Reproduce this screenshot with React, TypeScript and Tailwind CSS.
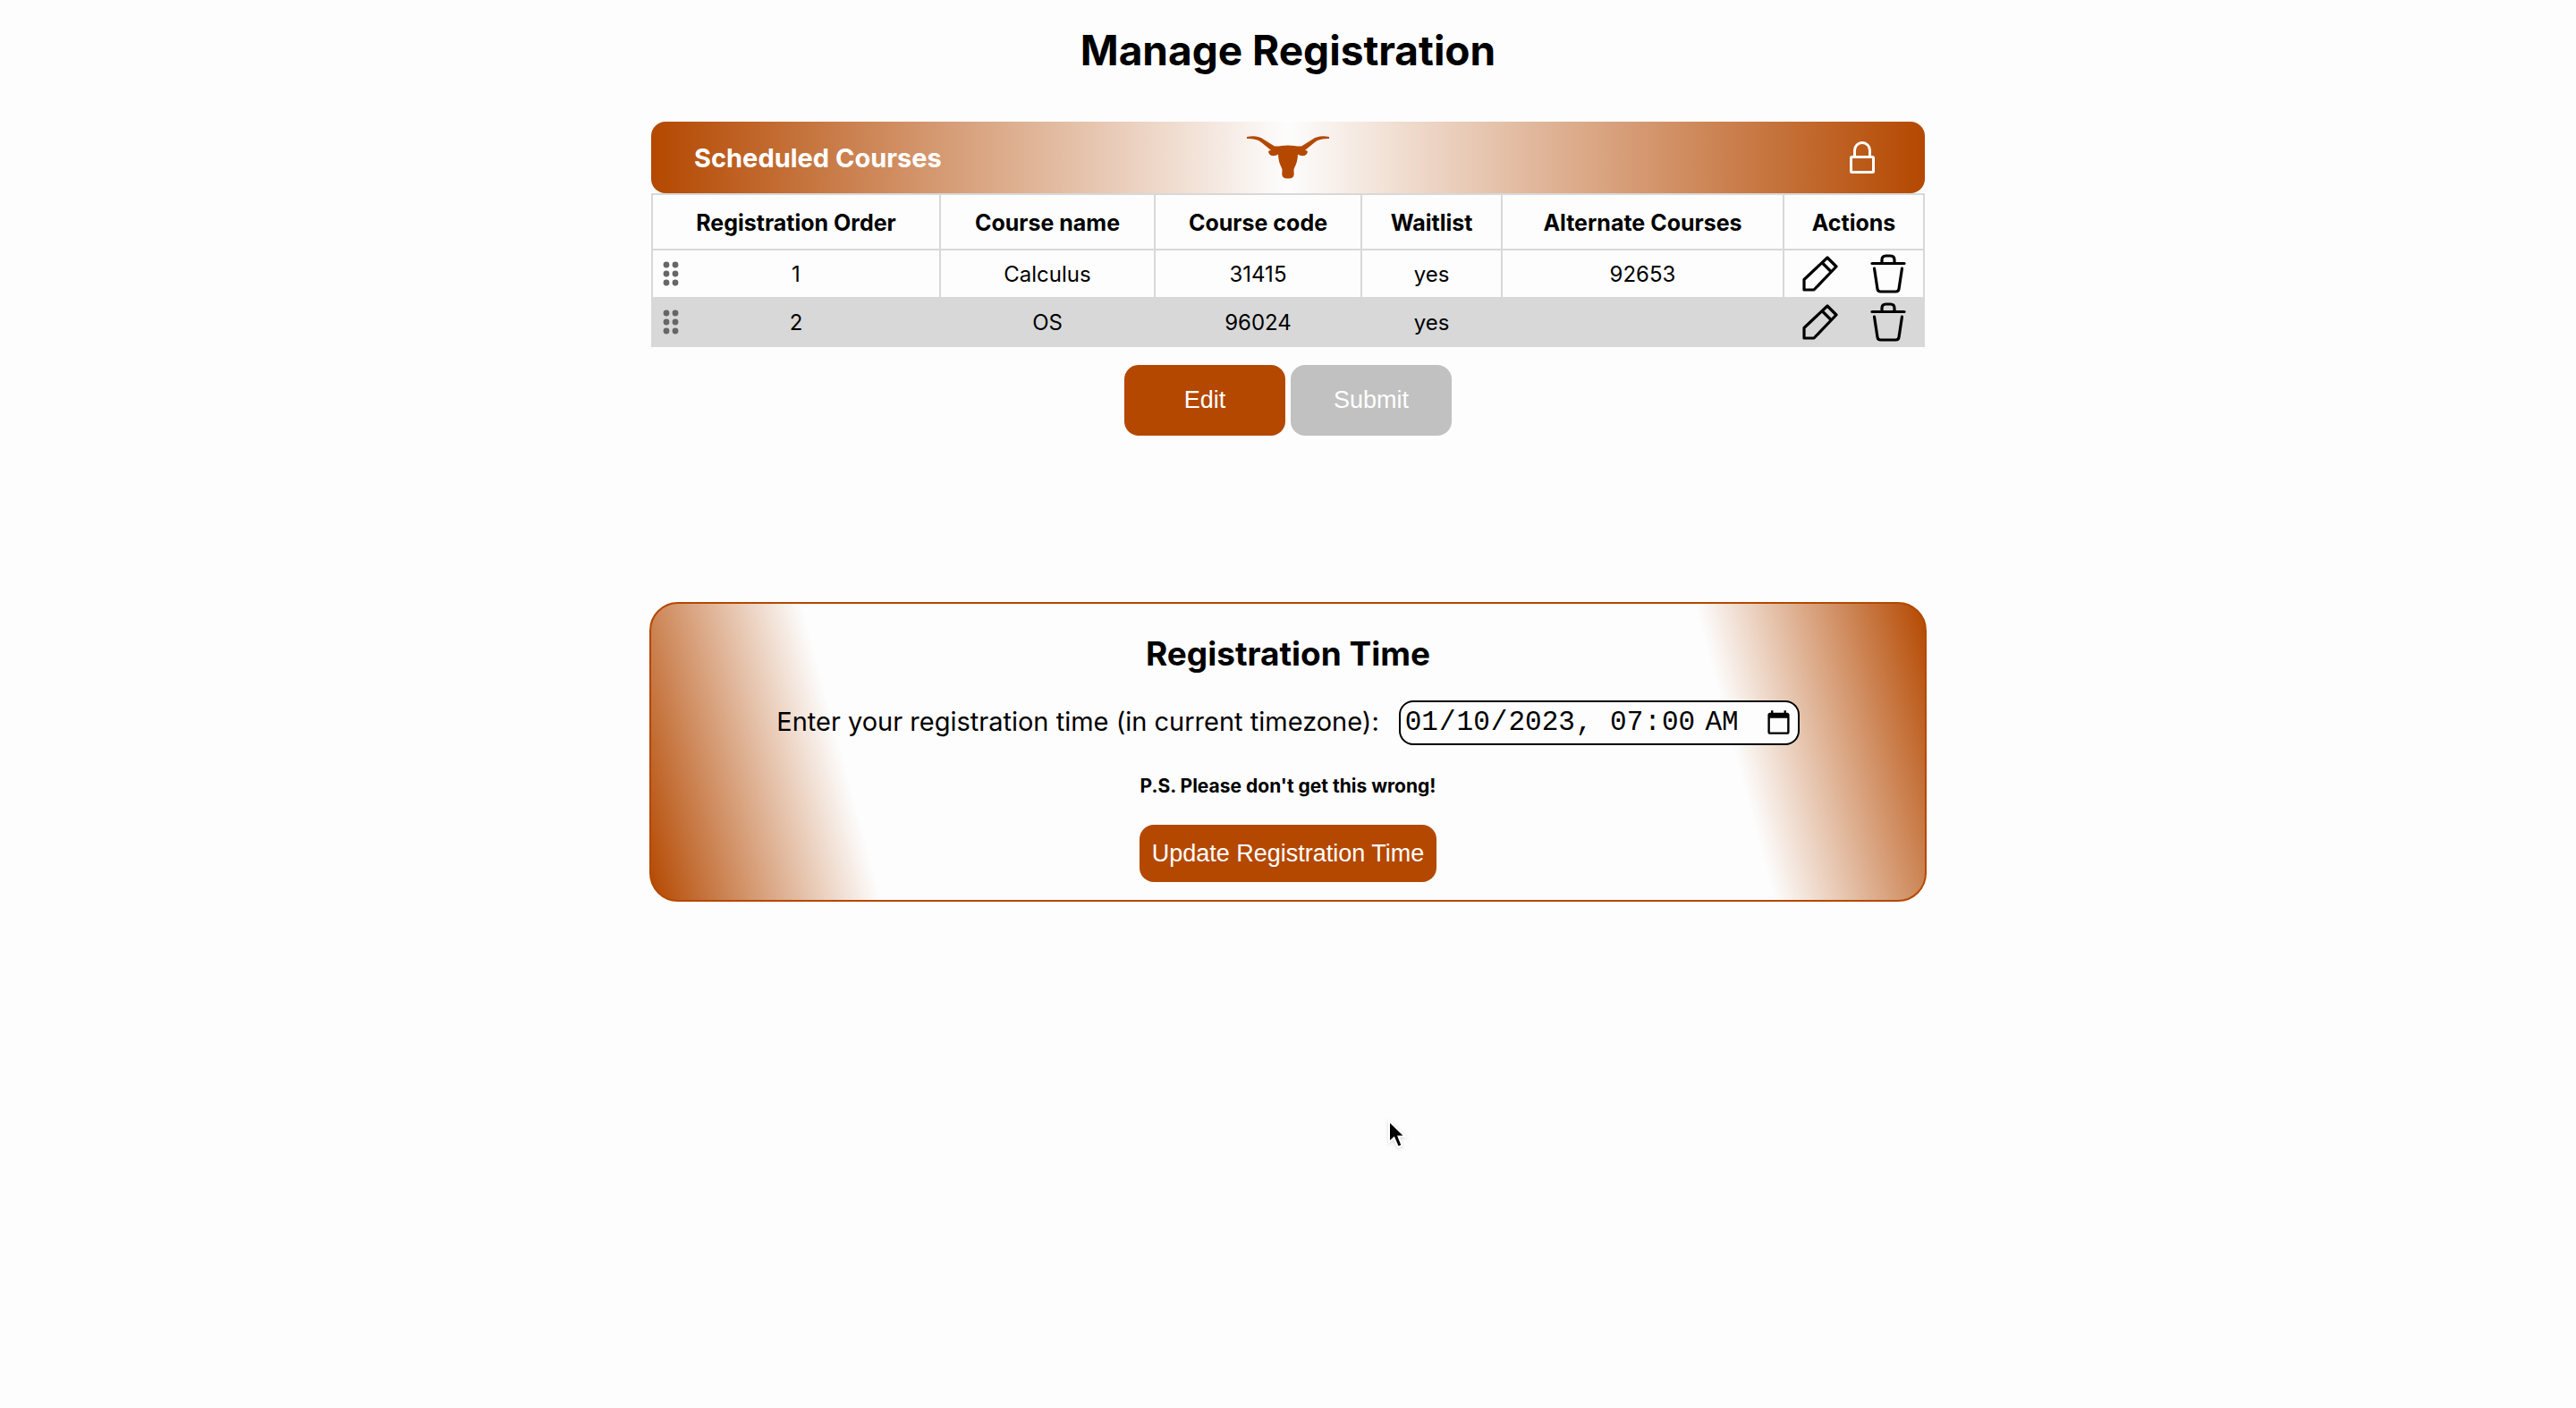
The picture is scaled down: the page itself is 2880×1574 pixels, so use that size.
import { useState } from "react";

type Course = { name: string; code: string; waitlist: string; alternate: string };

const courses: Course[] = [
  { name: "Calculus", code: "31415", waitlist: "yes", alternate: "92653" },
  { name: "OS", code: "96024", waitlist: "yes", alternate: "" },
];

const headings = [
  { label: "Registration Order", width: "w-[322px]" },
  { label: "Course name", width: "w-[240px]" },
  { label: "Course code", width: "w-[231px]" },
  { label: "Waitlist", width: "w-[157px]" },
  { label: "Alternate Courses", width: "w-[315px]" },
  { label: "Actions", width: "w-[157px]" },
];

function Longhorn() {
  return (
    <svg viewBox="0 0 92 48" className="h-12 w-[92px] fill-[#b44800]" aria-hidden="true">
      <path d="M0 1C8-.5 14 .5 19 4L31 11.500C35 12 40 10.500 46 10.500S57 12 61 11.500L73 4C78 .5 84-.5 92 1V3C84 3 80 4 76 7L65 16C69 16.500 68 18 67 20C65 23 60 22.500 57 20.500C57 27 55 32 53 36C51.500 39 54 43 51.500 46C49.500 48 42.500 48 40.500 46C38 43 40.500 39 39 36C37 32 35 27 35 20.500C32 22.500 27 23 25 20C24 18 23 16.500 27 16L16 7C12 4 8 3 0 3Z" />
    </svg>
  );
}

function Lock() {
  return (
    <svg viewBox="0 0 28 36" className="h-9 w-7" fill="none" stroke="currentColor" strokeWidth="3" strokeLinejoin="round" aria-hidden="true">
      <rect x="1.500" y="17.500" width="25" height="17" rx="1" />
      <path d="M5.500 17.500V10a8.500 8.500 0 0 1 17 0v7.500" />
    </svg>
  );
}

function Grip() {
  return (
    <svg viewBox="0 0 18 28" className="h-7 w-[18px] fill-[#666666]" aria-hidden="true">
      {[4, 14, 24].map((y) => (
        <g key={y}>
          <circle cx="4" cy={y} r="3.400" />
          <circle cx="14" cy={y} r="3.400" />
        </g>
      ))}
    </svg>
  );
}

function Pencil() {
  return (
    <svg viewBox="0 0 40 40" className="size-10" fill="none" stroke="currentColor" strokeWidth="3.200" strokeLinejoin="round" aria-hidden="true">
      <path d="M2 38V26.500L28 2L38 12L13 38Z" />
      <path d="M22 7.500L32.500 18" />
    </svg>
  );
}

function Trash() {
  return (
    <svg viewBox="0 0 40 44" className="h-11 w-10" fill="none" stroke="currentColor" strokeWidth="3.200" strokeLinecap="round" strokeLinejoin="round" aria-hidden="true">
      <path d="M2 10.500H38" />
      <path d="M13 10V6.500Q13 2 17.500 2H22.500Q27 2 27 6.500V10" />
      <path d="M4.500 16L8 39Q8.500 42 11.500 42H28.500Q31.500 42 32 39L35.500 16" />
    </svg>
  );
}

function Pointer() {
  return (
    <svg viewBox="0 0 22 34" className="pointer-events-none absolute left-[1551px] top-[1251px] h-[34px] w-[22px] drop-shadow" aria-hidden="true">
      <path d="M2 2V26L7.500 21L12 31.500L16.500 29.500L12.500 19.500H20Z" fill="black" stroke="white" strokeWidth="2" />
    </svg>
  );
}

export default function App() {
  const [time, setTime] = useState("2023-01-10T07:00");
  return (
    <main className="relative flex min-h-screen flex-col items-center bg-[#fdfdfd] font-[Inter,sans-serif] text-black">
      <h1 className="mt-[26px] text-[46px] leading-[60px] font-bold">Manage Registration</h1>

      <section className="mt-[50px] w-full max-w-[1424px]">
        <div className="grid h-20 grid-cols-3 items-center rounded-2xl bg-linear-[90deg,#b44800,#fdfdfd_50%,#b44800] px-12 text-white">
          <h2 className="pt-0.5 text-[29px] leading-9 font-bold">Scheduled Courses</h2>
          <span className="justify-self-center"><Longhorn /></span>
          <button type="button" aria-label="Lock schedule" className="mr-2 justify-self-end"><Lock /></button>
        </div>
        <div className="pr-0.5">
          <table className="w-full table-fixed border-collapse text-center text-[24px] leading-8">
            <thead>
              <tr className="h-[62px] text-[25px]">
                {headings.map((h) => (
                  <th key={h.label} className={`border-2 border-[#d8d8d8] pt-0.5 font-bold ${h.width}`}>{h.label}</th>
                ))}
              </tr>
            </thead>
            <tbody>
              {courses.map((c, i) => (
                <tr key={c.code} className="h-[54px] even:bg-[#d8d8d8]">
                  <td className="border-2 border-[#d8d8d8]">
                    <div className="grid grid-cols-[40px_1fr_40px] items-center">
                      <span className="justify-self-center"><Grip /></span>
                      <span className="pt-0.5">{i + 1}</span>
                    </div>
                  </td>
                  <td className="border-2 border-[#d8d8d8] pt-0.5">{c.name}</td>
                  <td className="border-2 border-[#d8d8d8] pt-0.5">{c.code}</td>
                  <td className="border-2 border-[#d8d8d8] pt-0.5">{c.waitlist}</td>
                  <td className="border-2 border-[#d8d8d8] pt-0.5">{c.alternate}</td>
                  <td className="border-2 border-[#d8d8d8]">
                    <div className="flex items-center justify-center gap-9">
                      <button type="button" aria-label={`Edit ${c.name}`}><Pencil /></button>
                      <button type="button" aria-label={`Delete ${c.name}`}><Trash /></button>
                    </div>
                  </td>
                </tr>
              ))}
            </tbody>
          </table>
        </div>
      </section>

      <div className="mt-5 flex gap-1.5 font-[Liberation_Sans,Arial,sans-serif] text-[27px] leading-8 text-white">
        <button type="button" className="h-[79px] w-[180px] rounded-2xl bg-[#b44800] pb-0.5">Edit</button>
        <button type="button" disabled className="h-[79px] w-[180px] rounded-2xl bg-[#c1c1c1] pb-0.5">Submit</button>
      </div>

      <form
        onSubmit={(e) => e.preventDefault()}
        className="mt-[186px] flex w-full max-w-[1428px] flex-col items-center rounded-[32px] border-2 border-[#b44800] bg-linear-[75deg,#b44800,#fdfdfd_17%,#fdfdfd_83%,#b44800] pt-8 pb-5"
      >
        <h2 className="text-[37px] leading-12 font-bold">Registration Time</h2>
        <div className="mt-7 flex items-center gap-[22px]">
          <label htmlFor="registration-time" className="pb-0.5 text-[29px] leading-9">Enter your registration time (in current timezone):</label>
          <input
            id="registration-time"
            type="datetime-local"
            value={time}
            onChange={(e) => setTime(e.target.value)}
            className="h-[50px] w-[448px] rounded-2xl border-2 border-black bg-[#fdfdfd] px-1 font-[Liberation_Mono,monospace] text-[31px]"
          />
        </div>
        <p className="mt-8 text-[21px] leading-7 font-bold">P.S. Please don&apos;t get this wrong!</p>
        <button type="submit" className="mt-[29px] h-16 rounded-2xl bg-[#b44800] px-3.5 font-[Liberation_Sans,Arial,sans-serif] text-[27px] text-white">
          Update Registration Time
        </button>
      </form>
      <Pointer />
    </main>
  );
}
